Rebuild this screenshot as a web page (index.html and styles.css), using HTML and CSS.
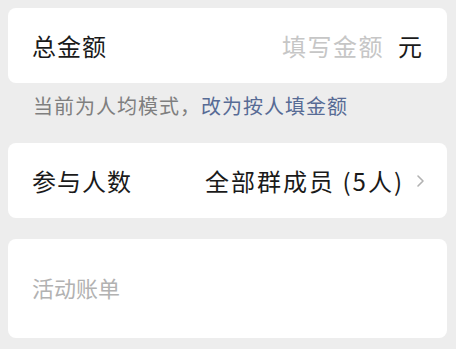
FILE: index.html
```html
<!DOCTYPE html>
<html lang="zh">
<head>
<meta charset="utf-8">
<link rel="stylesheet" href="styles.css">
</head>
<body>
<div class="page">
  <div class="card row">
    <span class="label">总金额</span>
    <span class="right"><span class="placeholder">填写金额</span><span class="unit">元</span></span>
  </div>
  <div class="hint">当前为人均模式，<span class="link">改为按人填金额</span></div>
  <div class="card row">
    <span class="label">参与人数</span>
    <span class="right"><span class="value">全部群成员 (5人)</span>
      <svg class="chev" width="9" height="14" viewBox="0 0 9 14"><polyline points="2,2 7,7 2,12" fill="none" stroke="#b2b2b2" stroke-width="1.6" stroke-linecap="round" stroke-linejoin="round"/></svg>
    </span>
  </div>
  <div class="card memo">
    <span class="memo-ph">活动账单</span>
  </div>
</div>
</body>
</html>
```

FILE: styles.css
```css
html, body {
  margin: 0;
  padding: 0;
  background: #ededed;
}
body {
  font-family: "Noto Sans CJK SC", "Noto Sans", sans-serif;
  color: #1a1a1a;
}
.page {
  padding: 8px 9px 0 8px;
  display: flex;
  flex-direction: column;
}
.card {
  background: #fff;
  border-radius: 8px;
}
.row {
  height: 75px;
  box-sizing: border-box;
  padding: 0 22px 0 24px;
  display: flex;
  align-items: center;
  justify-content: space-between;
}
.label {
  font-size: 24px;
  letter-spacing: 1px;
}
.right {
  display: flex;
  align-items: center;
}
.placeholder {
  font-size: 24px;
  color: #c6c6c6;
  letter-spacing: 1.5px;
}
.unit {
  font-size: 24px;
  margin-left: 14px;
  margin-right: 3px;
}
.value {
  font-size: 24px;
  letter-spacing: 2px;
}
.chev {
  margin-left: 12px;
}
.hint {
  padding: 10px 0 25px 25px;
  font-size: 20px;
  line-height: 25px;
  letter-spacing: 1px;
  color: #7f7f7f;
}
.link {
  color: #576b95;
}
.memo {
  margin-top: 21px;
  height: 99px;
  box-sizing: border-box;
  padding: 33px 24px 0 24px;
}
.memo-ph {
  font-size: 22px;
  line-height: 30px;
  color: #b2b2b2;
}
```
